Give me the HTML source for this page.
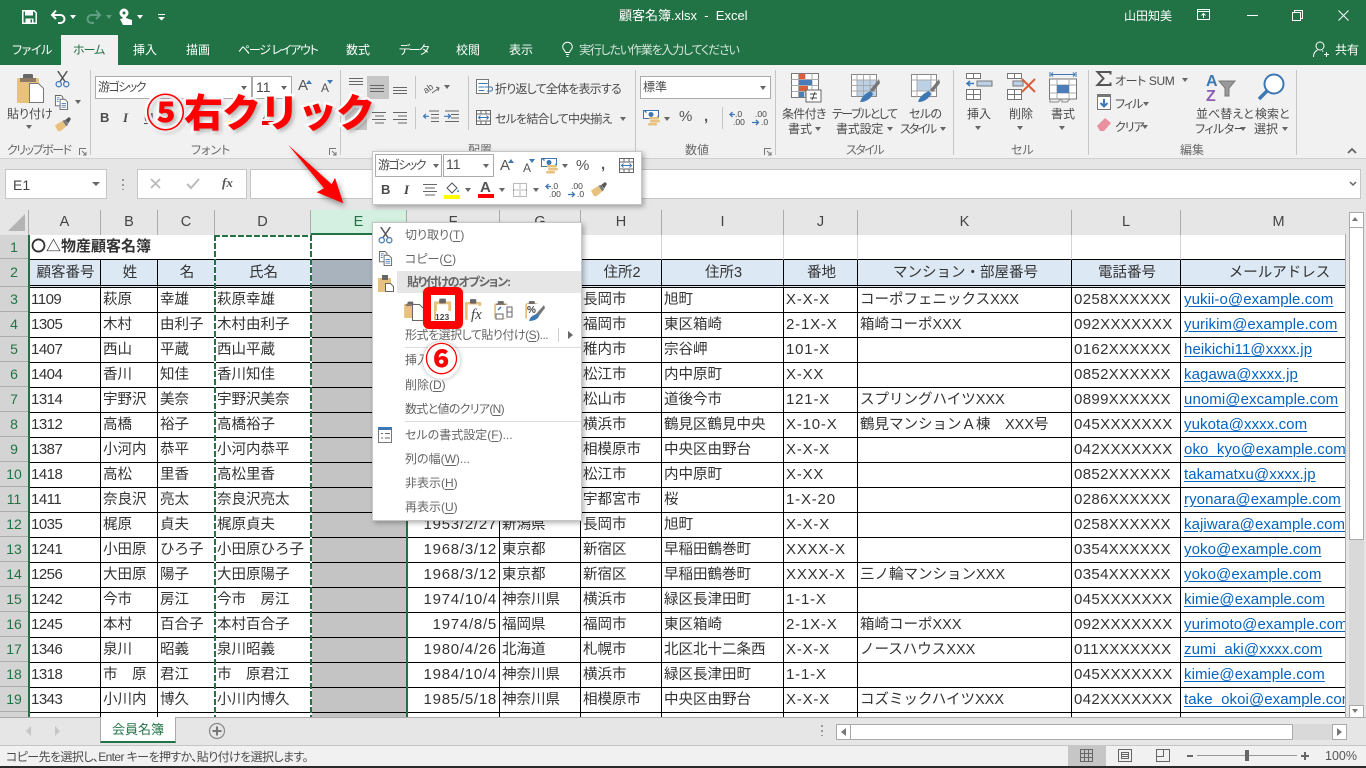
<!DOCTYPE html>
<html lang="ja"><head><meta charset="utf-8"><title>顧客名簿.xlsx - Excel</title>
<style>
*{box-sizing:border-box}
html,body{margin:0;padding:0;width:1366px;height:768px;overflow:hidden;background:#e6e6e6}
body{position:relative;font-family:"Liberation Sans","Noto Sans CJK JP",sans-serif}
.a{position:absolute}
.t{position:absolute;white-space:nowrap;line-height:16px;font-size:12px;color:#4c4c4c;font-feature-settings:"palt"}
.w{color:#fff}
.g{color:#6a6a6a}
.sep{position:absolute;top:70px;height:85px;width:1px;background:#c6c6c6}
.box{position:absolute;background:#fff;border:1px solid #ababab}
.dd{position:absolute;width:0;height:0;border-left:3.5px solid transparent;border-right:3.5px solid transparent;border-top:4px solid #666}
svg{position:absolute;overflow:visible}
#grid{position:absolute;left:29px;top:235px;width:1317px;height:482px;overflow:hidden;background:#fff}
table{border-collapse:separate;border-spacing:0;table-layout:fixed;width:1317px;font-size:14.5px;color:#333}
td{padding:0 0 0 2px;height:25px;border-right:1px solid #000;border-bottom:1px solid #000;white-space:nowrap;overflow:hidden;line-height:24px}
tr.r1 td{height:24px;border-right:1px solid #d4d4d4}
tr.r2 td{height:28px;border-bottom:3px double #000;background:#dce9f5;text-align:center}
tr.r2 td.e,td.e{padding:0}
tr.r2 td.e{background:#a9b3bd}
td.e{background:#c4c4c4}
td.n{font-size:15px;letter-spacing:-.5px}
td.d{text-align:right;padding-right:2px;font-size:15px;letter-spacing:.75px}
td.x{font-size:15px;letter-spacing:.35px}
td.j{font-size:15px;letter-spacing:.8px}
td.m{font-size:15px;letter-spacing:.08px;color:#0563c1;padding-left:3px}
td.m u{text-underline-offset:2px}
.ch{position:absolute;top:210px;height:25px;border-right:1px solid #ababab;background:#e6e6e6;text-align:center;font-size:14.5px;line-height:24px;color:#444}
.rh{position:absolute;left:0;width:28px;background:#d4d4d4;border-bottom:1px solid #ababab;text-align:center;font-size:14px;color:#217346;line-height:24px}
.mi{position:absolute;left:405px;white-space:nowrap;font-size:12px;line-height:16px;color:#666;font-feature-settings:"palt"}
.mi u{text-underline-offset:2px}
</style></head>
<body>
<svg width="0" height="0" style="position:absolute">
<defs>
<symbol id="clip" viewBox="0 0 30 30"><rect x="2" y="5" width="22" height="25" rx="1.5" fill="#e8c17f"/><rect x="8" y="1" width="10" height="7" rx="1.5" fill="#666"/><rect x="5" y="5" width="16" height="4" fill="#8a7a66"/></symbol>
<symbol id="scis" viewBox="0 0 16 18"><path d="M3 0l7.5 11M13 0L5.5 11" stroke="#555" stroke-width="1.6" fill="none"/><circle cx="4" cy="14" r="2.8" fill="none" stroke="#4a7ebb" stroke-width="1.4"/><circle cx="12" cy="14" r="2.8" fill="none" stroke="#4a7ebb" stroke-width="1.4"/></symbol>
<symbol id="copy" viewBox="0 0 16 16"><path d="M1.5.5h6l2 2v9h-8z" fill="#fff" stroke="#666"/><path d="M6.500 4.500h5l3 3v8h-8z" fill="#fff" stroke="#666"/><path d="M8 9h5M8 11h5M8 13h5M3 3h3M3 5h2M3 7h2" stroke="#4a7ebb"/></symbol>
<symbol id="brush" viewBox="0 0 18 16"><path d="M1 9l8-5 4 6-6 5H4z" fill="#e8c17f"/><path d="M9 4l4 6 2-2-3-5z" fill="#777"/><path d="M12 3l4-3 2 2-3 5z" fill="#555"/></symbol>
<symbol id="inc" viewBox="0 0 16 16"><text x="6" y="7" font-size="8.500" fill="#444" font-family="Liberation Sans">.0</text><text x="4" y="15" font-size="8.500" fill="#444" font-family="Liberation Sans">.00</text><path d="M1 4.500h5M3.500 2L1 4.500 3.500 7" stroke="#3d78b5" stroke-width="1.300" fill="none"/></symbol>
<symbol id="dec" viewBox="0 0 16 16"><text x="3" y="7" font-size="8.500" fill="#444" font-family="Liberation Sans">.00</text><text x="9" y="15" font-size="8.500" fill="#444" font-family="Liberation Sans">.0</text><path d="M0 12.500h6M4 10l2.500 2.500L4 15" stroke="#3d78b5" stroke-width="1.300" fill="none"/></symbol>
<symbol id="cur" viewBox="0 0 17 16"><rect x=".5" y=".5" width="15" height="8" fill="#fff" stroke="#3d78b5"/><path d="M.5 .5h3v3M15.500 5v3.500h-3" fill="#3d78b5"/><circle cx="8" cy="4.500" r="2.500" fill="#3d78b5"/><rect x="6" y="7" width="10" height="2.500" rx="1" fill="#e8c17f"/><rect x="7" y="10" width="10" height="2.500" rx="1" fill="#e8c17f"/><rect x="5" y="13" width="9" height="2.500" rx="1" fill="#e8c17f"/></symbol>
<symbol id="merge" viewBox="0 0 15 15"><rect x=".5" y=".5" width="14" height="14" fill="#fff" stroke="#666"/><path d="M.5 4h14M.5 11h14M5 .5V4M10 .5V4M5 11v3.500M10 11v3.500" stroke="#666" fill="none"/><path d="M2.500 7.500h10M4.500 5.500l-2 2 2 2M10.500 5.500l2 2-2 2" stroke="#3d78b5" fill="none"/></symbol>
<symbol id="clipo" viewBox="0 0 20 23"><rect x="0" y="3" width="18" height="20" rx="1" fill="#e8c17f"/><rect x="3" y="6" width="12" height="17" fill="#fff"/><rect x="5.500" y="0" width="7" height="5" rx="1" fill="#666"/></symbol>
</defs></svg>

<!-- title bar -->
<div class="a" style="left:0;top:0;width:1366px;height:65px;background:#217346"></div>
<svg style="left:22px;top:10px" width="15" height="14" viewBox="0 0 15 14"><path d="M.8.8h11.400L14.200 2.800v10.400H.8z" fill="none" stroke="#fff" stroke-width="1.500"/><rect x="3" y="1" width="8" height="4.500" fill="#fff"/><rect x="3.500" y="8.500" width="8" height="4.500" fill="#fff"/><rect x="8.500" y="9.500" width="1.500" height="3" fill="#217346"/></svg>
<svg style="left:51px;top:9px" width="15" height="15" viewBox="0 0 15 15"><path d="M1.500 6h8a4 4 0 0 1 0 8H7M5 1.500L1 6l4 4" fill="none" stroke="#fff" stroke-width="2"/></svg>
<div class="dd" style="left:70px;top:15px;border-top-color:#fff"></div>
<svg style="left:86px;top:9px" width="15" height="15" viewBox="0 0 15 15"><path d="M13.500 6h-8a4 4 0 0 0 0 8H8M10 1.500L14 6l-4 4" fill="none" stroke="#5f9f7f" stroke-width="2"/></svg>
<div class="dd" style="left:106px;top:15px;border-top-color:#5f9f7f"></div>
<svg style="left:118px;top:8px" width="15" height="18" viewBox="0 0 15 18"><circle cx="6" cy="5" r="4.500" fill="#fff"/><rect x="4.500" y="4" width="3.500" height="9" fill="#fff"/><path d="M2 11l3 6h9v-5l-6-2z" fill="#fff"/><circle cx="6" cy="5" r="1.500" fill="#217346"/></svg>
<div class="dd" style="left:137px;top:15px;border-top-color:#fff"></div>
<svg style="left:158px;top:14px" width="7" height="7" viewBox="0 0 7 7"><path d="M0 .5h7" stroke="#fff"/><path d="M0 3h7L3.500 6.500z" fill="#fff"/></svg>
<div class="t w" style="left:619px;top:8px;font-size:13px">顧客名簿.xlsx&nbsp; -&nbsp; Excel</div>
<div class="t w" style="left:1124px;top:8px;font-size:12px">山田知美</div>
<svg style="left:1197px;top:9px" width="15" height="12" viewBox="0 0 15 12"><path d="M.5.500h12v10H.5zM.5 2.500h12M6.500 9V5M4.500 6.500l2-2 2 2" fill="none" stroke="#fff"/></svg>
<div class="a" style="left:1247px;top:15px;width:11px;height:1px;background:#fff"></div>
<svg style="left:1292px;top:10px" width="11" height="11" viewBox="0 0 11 11"><path d="M.5 2.500h8v8h-8zM2.500 2.500v-2h8v8h-2" fill="none" stroke="#fff"/></svg>
<svg style="left:1338px;top:10px" width="11" height="11" viewBox="0 0 11 11"><path d="M.5.500l10 10M10.500.500l-10 10" stroke="#fff"/></svg>

<!-- tabs -->
<div class="a" style="left:61px;top:35px;width:57px;height:31px;background:#f1f1f1"></div>
<div class="t w" style="left:12px;top:42px;letter-spacing:-.4px">ファイル</div>
<div class="t" style="left:73px;top:42px;color:#217346;letter-spacing:-1px">ホーム</div>
<div class="t w" style="left:133px;top:42px">挿入</div>
<div class="t w" style="left:186px;top:42px">描画</div>
<div class="t w" style="left:238px;top:42px;letter-spacing:-1.300px">ページ レイアウト</div>
<div class="t w" style="left:346px;top:42px">数式</div>
<div class="t w" style="left:399px;top:42px;letter-spacing:-1.500px">データ</div>
<div class="t w" style="left:456px;top:42px">校閲</div>
<div class="t w" style="left:509px;top:42px">表示</div>
<svg style="left:562px;top:42px" width="11" height="15" viewBox="0 0 11 15"><path d="M3.500 10.500C3 8 .7 7.500.7 5a4.800 4.800 0 0 1 9.600 0c0 2.500-2.300 3-2.800 5.500zM4 12.500h3M4.500 14.500h2" fill="none" stroke="#fff"/></svg>
<div class="t" style="left:579px;top:42px;color:#d5e6dc;letter-spacing:-1.200px">実行したい作業を入力してください</div>
<svg style="left:1313px;top:41px" width="16" height="17" viewBox="0 0 16 17"><circle cx="7" cy="5" r="4" fill="none" stroke="#fff"/><path d="M.5 16c0-4 2-6 4-7M9 9.500l1 1M11 13.500h5M13.500 11v5" fill="none" stroke="#fff"/></svg>
<div class="t w" style="left:1335px;top:42px">共有</div>

<!-- ribbon -->
<div class="a" style="left:0;top:65px;width:1366px;height:93px;background:#f1f1f1"></div>
<div class="a" style="left:0;top:158px;width:1366px;height:1px;background:#d0d0d0"></div>
<div class="sep" style="left:90px"></div><div class="sep" style="left:340px"></div><div class="sep" style="left:635px"></div><div class="sep" style="left:775px"></div><div class="sep" style="left:953px"></div><div class="sep" style="left:1088px"></div><div class="sep" style="left:1296px"></div>

<!-- clipboard -->
<svg style="left:15px;top:73px" width="30" height="30"><use href="#clip" width="30" height="30"/><path d="M14.500 13.500h9l5 5v14h-14z" transform="translate(0 -3)" fill="#fff" stroke="#777"/></svg>
<div class="t" style="left:7px;top:106px">貼り付け</div>
<div class="dd" style="left:26px;top:125px"></div>
<svg style="left:55px;top:71px" width="15" height="17"><use href="#scis" width="15" height="17"/></svg>
<svg style="left:54px;top:95px" width="15" height="15"><use href="#copy" width="15" height="15"/></svg>
<div class="dd" style="left:75px;top:100px"></div>
<svg style="left:54px;top:117px" width="17" height="15"><use href="#brush" width="17" height="15"/></svg>
<div class="t g" style="left:7px;top:142px;letter-spacing:-1.500px">クリップボード</div>
<svg style="left:79px;top:148px" width="8" height="8" viewBox="0 0 8 8"><path d="M.5 7V.5H7M3 3l4 4M7 4v3H4" fill="none" stroke="#777"/></svg>

<!-- font -->
<div class="box" style="left:95px;top:76px;width:157px;height:23px"></div>
<div class="t" style="left:98px;top:79px;letter-spacing:-1.500px">游ゴシック</div>
<div class="dd" style="left:241px;top:86px"></div>
<div class="box" style="left:252px;top:76px;width:40px;height:23px"></div>
<div class="t" style="left:256px;top:79px;font-size:14px">11</div>
<div class="dd" style="left:281px;top:86px"></div>
<div class="t" style="left:298px;top:78px;font-size:15px;color:#555">A</div>
<div class="dd" style="left:306px;top:80px;border-top:0;border-bottom:4px solid #3d78b5"></div>
<div class="t" style="left:321px;top:80px;font-size:12px;color:#555">A</div>
<div class="dd" style="left:327px;top:80px;border-top-color:#3d78b5"></div>
<div class="t" style="left:100px;top:110px;font-weight:bold;font-size:13px">B</div>
<div class="t" style="left:123px;top:110px;font-style:italic;font-family:'Liberation Serif';font-size:13px;font-weight:bold">I</div>
<div class="t" style="left:144px;top:110px;font-size:13px;font-weight:bold;text-decoration:underline">U</div>
<div class="a" style="left:262px;top:121px;width:14px;height:4px;background:#e00"></div>
<div class="t" style="left:263px;top:107px;font-size:13px;color:#555">A</div>
<div class="a" style="left:228px;top:121px;width:3px;height:4px;background:#ff0"></div>
<div class="t g" style="left:191px;top:142px">フォント</div>
<svg style="left:329px;top:148px" width="8" height="8" viewBox="0 0 8 8"><path d="M.5 7V.5H7M3 3l4 4M7 4v3H4" fill="none" stroke="#777"/></svg>

<!-- alignment -->
<div class="a" style="left:367px;top:76px;width:22px;height:23px;background:#c6c6c6"></div>
<div class="a" style="left:345px;top:106px;width:22px;height:24px;background:#c6c6c6"></div>
<svg style="left:349px;top:78px" width="60" height="18" viewBox="0 0 60 18"><path d="M0 .500h14M0 3.500h14M0 6.500h14M21 7.500h14M21 10.500h14M21 13.500h14M44 9.500h14M44 12.500h14M44 15.500h14" stroke="#666"/></svg>
<svg style="left:349px;top:111px" width="60" height="15" viewBox="0 0 60 15"><path d="M23 1.500h14M26 5h9M23 8.500h14M26 12h9M44 1.500h14M49 5h9M44 8.500h14M49 12h9" stroke="#666"/></svg>
<div class="a" style="left:415px;top:76px;width:1px;height:23px;background:#c6c6c6"></div>
<div class="a" style="left:415px;top:107px;width:1px;height:22px;background:#c6c6c6"></div>
<svg style="left:423px;top:80px" width="17" height="14" viewBox="0 0 17 14"><text x="0" y="11" font-size="9" fill="#555" transform="rotate(-35 6 8)" font-family="Liberation Sans">ab</text><path d="M9 13l7-5M13 7l3 1-1 3" fill="none" stroke="#666"/></svg>
<div class="dd" style="left:444px;top:85px"></div>
<svg style="left:423px;top:110px" width="37" height="15" viewBox="0 0 37 15"><path d="M6 1h10M8 4.500h8M8 8h8M8 11.500h8M22 1h14M28 4.500h8M28 8h8M22 11.500h14" stroke="#666"/><path d="M6 6.300H.5M3 4L.5 6.300 3 8.500M21 6.300h6M25 4l2.500 2.300L25 8.500" fill="none" stroke="#3d78b5" stroke-width="1.200"/></svg>
<div class="a" style="left:468px;top:76px;width:1px;height:54px;background:#c6c6c6"></div>
<svg style="left:476px;top:79px" width="17" height="15" viewBox="0 0 17 15"><rect x=".5" y=".5" width="12" height="14" fill="#fff" stroke="#777"/><path d="M2.500 4.500h9M2.500 8h6M2.500 11.500h6" stroke="#3d78b5"/><path d="M9 8h6a2 2 0 0 1-1 4h-3" fill="none" stroke="#3d78b5"/></svg>
<div class="t" style="left:495px;top:81px;letter-spacing:-.8px">折り返して全体を表示する</div>
<svg style="left:476px;top:110px" width="15" height="15"><use href="#merge" width="15" height="15"/></svg>
<div class="t" style="left:495px;top:111px;letter-spacing:-.8px">セルを結合して中央揃え</div>
<div class="dd" style="left:620px;top:117px"></div>
<div class="t g" style="left:468px;top:142px">配置</div>

<!-- number -->
<div class="box" style="left:640px;top:76px;width:131px;height:23px"></div>
<div class="t" style="left:643px;top:79px">標準</div>
<div class="dd" style="left:760px;top:86px"></div>
<svg style="left:643px;top:110px" width="17" height="16"><use href="#cur" width="17" height="16"/></svg>
<div class="dd" style="left:664px;top:117px"></div>
<div class="t" style="left:679px;top:109px;font-size:15px;color:#555">%</div>
<div class="t" style="left:704px;top:109px;font-size:15px;font-weight:bold;color:#555">,</div>
<div class="a" style="left:722px;top:107px;width:1px;height:22px;background:#c6c6c6"></div>
<svg style="left:729px;top:110px" width="16" height="16"><use href="#inc" width="16" height="16"/></svg>
<svg style="left:752px;top:110px" width="16" height="16"><use href="#dec" width="16" height="16"/></svg>
<div class="t g" style="left:685px;top:142px">数値</div>
<svg style="left:764px;top:148px" width="8" height="8" viewBox="0 0 8 8"><path d="M.5 7V.5H7M3 3l4 4M7 4v3H4" fill="none" stroke="#777"/></svg>

<!-- styles -->
<svg style="left:791px;top:73px" width="31" height="30" viewBox="0 0 31 30"><rect x=".5" y=".5" width="27" height="24" fill="#fff" stroke="#777"/><path d="M.5 6.500h27M.5 12.500h27M.5 18.500h27M7.500.5v24M14 .5v24M21 .5v24" stroke="#aaa"/><rect x="8" y="1" width="6" height="5" fill="#d9603b"/><rect x="8" y="7" width="13" height="5" fill="#4a7ebb"/><rect x="8" y="13" width="9" height="5" fill="#d9603b"/><rect x="8" y="19" width="5" height="5" fill="#4a7ebb"/><rect x="15" y="17" width="15" height="12" fill="#fff" stroke="#666"/><path d="M19 21h7M19 25h7M24 19l-3 8" stroke="#444"/></svg>
<svg style="left:851px;top:73px" width="30" height="30" viewBox="0 0 30 30"><rect x=".5" y="1.500" width="25" height="22" fill="#fff" stroke="#888"/><rect x="6" y="7" width="19" height="16" fill="#bcd0e6"/><path d="M.5 7h25M.5 12.500h25M.5 18h25M6 1.500v22M12.500 1.500v22M19 1.500v22" stroke="#aaa"/><path d="M19 17l9-11 1 4-7 9z" fill="#777"/><path d="M9 29c2-6 6-9 11-11l2 3c-2 4-6 8-13 8z" fill="#3d78b5"/></svg>
<svg style="left:911px;top:73px" width="30" height="30" viewBox="0 0 30 30"><rect x=".5" y="1.500" width="25" height="22" fill="#fff" stroke="#888"/><rect x="6" y="7" width="14" height="11" fill="#bcd0e6"/><path d="M.5 7h25M.5 18h25M6 1.500v22M20 1.500v22" stroke="#aaa"/><path d="M19 17l9-11 1 4-7 9z" fill="#777"/><path d="M7 29c2-6 6-9 11-11l2 3c-2 4-6 8-13 8z" fill="#3d78b5"/></svg>
<div class="t" style="left:782px;top:106px;letter-spacing:-.7px">条件付き</div>
<div class="t" style="left:788px;top:121px">書式</div><div class="dd" style="left:815px;top:127px"></div>
<div class="t" style="left:832px;top:106px;letter-spacing:-1.500px">テーブルとして</div>
<div class="t" style="left:836px;top:121px;letter-spacing:-.2px">書式設定</div><div class="dd" style="left:887px;top:127px"></div>
<div class="t" style="left:909px;top:106px;letter-spacing:-.6px">セルの</div>
<div class="t" style="left:900px;top:121px;letter-spacing:-2px">スタイル</div><div class="dd" style="left:940px;top:127px"></div>
<div class="t g" style="left:846px;top:142px;letter-spacing:-1.500px">スタイル</div>

<!-- cells -->
<svg style="left:966px;top:73px" width="27" height="28" viewBox="0 0 27 28"><path d="M.5.500h14v5H.5zM7.500.5v5M.5 16.500h14v10H.5zM.5 21.500h14M7.500 16.500v10" fill="#fff" stroke="#777"/><rect x="11" y="8" width="15" height="5" fill="#bcd0e6" stroke="#777"/><path d="M1 10.500h7M4 8l-3 2.500L4 13" fill="none" stroke="#3d78b5" stroke-width="1.500"/></svg>
<svg style="left:1007px;top:73px" width="30" height="28" viewBox="0 0 30 28"><path d="M.5.500h14v5H.5zM7.500.5v5M.5 16.500h14v10H.5zM.5 21.500h14M7.500 16.500v10" fill="#fff" stroke="#777"/><rect x="6" y="8" width="10" height="5" fill="#bcd0e6" stroke="#777"/><path d="M15 6l13 13M28 6L15 19" stroke="#d9603b" stroke-width="2"/></svg>
<svg style="left:1049px;top:71px" width="28" height="32" viewBox="0 0 28 32"><path d="M1 1v5M27 1v5M2 3.500h24M2 3.500l2-2M2 3.500l2 2M26 3.500l-2-2M26 3.500l-2 2" fill="none" stroke="#3d78b5"/><rect x=".5" y="8" width="27" height="20" fill="#fff" stroke="#777"/><path d="M8 8v20M20 8v20M.5 14h27M.5 22h27" stroke="#aaa"/><rect x="8" y="14" width="12" height="8" fill="#4a7ebb"/><path d="M1 28v3h8l3-3M13 28v3h5l3-3" fill="none" stroke="#888"/></svg>
<div class="t" style="left:967px;top:106px">挿入</div><div class="dd" style="left:975px;top:126px"></div>
<div class="t" style="left:1009px;top:106px">削除</div><div class="dd" style="left:1017px;top:126px"></div>
<div class="t" style="left:1051px;top:106px">書式</div><div class="dd" style="left:1059px;top:126px"></div>
<div class="t g" style="left:1011px;top:142px">セル</div>

<!-- editing -->
<svg style="left:1096px;top:71px" width="15" height="15" viewBox="0 0 15 15"><path d="M14.500 3.500V1H1.500l6 6.500-6 6.500h13v-2.500" fill="none" stroke="#555" stroke-width="2"/></svg>
<div class="t" style="left:1115px;top:73px;letter-spacing:-.4px">オート SUM</div><div class="dd" style="left:1182px;top:78px"></div>
<svg style="left:1097px;top:94px" width="14" height="16" viewBox="0 0 14 16"><rect x=".5" y=".5" width="13" height="15" fill="#fff" stroke="#777"/><rect width="14" height="3" fill="#777"/><path d="M7 5v7M3.500 9L7 12.500 10.500 9" fill="none" stroke="#3d78b5" stroke-width="2"/></svg>
<div class="t" style="left:1115px;top:96px;letter-spacing:-1px">フィル</div><div class="dd" style="left:1143px;top:102px"></div>
<svg style="left:1097px;top:118px" width="14" height="13" viewBox="0 0 14 13"><path d="M0 8L8 0l6 5-7 8H3z" fill="#ea8fa0"/></svg>
<div class="t" style="left:1115px;top:119px;letter-spacing:-1px">クリア</div><div class="dd" style="left:1142px;top:125px"></div>
<svg style="left:1206px;top:71px" width="30" height="32" viewBox="0 0 30 32"><text x="0" y="15" font-size="16" font-weight="bold" fill="#3d78b5" font-family="Liberation Sans">A</text><text x="0" y="30" font-size="16" font-weight="bold" fill="#8e5eb0" font-family="Liberation Sans">Z</text><path d="M13 10h16l-6 7v8h-4v-8z" fill="#999" stroke="#777"/></svg>
<svg style="left:1257px;top:73px" width="28" height="28" viewBox="0 0 28 28"><circle cx="17" cy="11" r="9.500" fill="#fff" stroke="#3d78b5" stroke-width="2"/><path d="M10 18L2 26" stroke="#3d78b5" stroke-width="3.500"/></svg>
<div class="t" style="left:1196px;top:106px">並べ替えと</div>
<div class="t" style="left:1195px;top:121px;letter-spacing:-.5px">フィルター</div><div class="dd" style="left:1240px;top:127px"></div>
<div class="t" style="left:1255px;top:106px">検索と</div>
<div class="t" style="left:1254px;top:121px">選択</div><div class="dd" style="left:1282px;top:127px"></div>
<div class="t g" style="left:1180px;top:142px">編集</div>
<svg style="left:1347px;top:147px" width="10" height="7" viewBox="0 0 10 7"><path d="M1 6l4-4 4 4" fill="none" stroke="#666" stroke-width="1.800"/></svg>

<!-- formula bar -->
<div class="box" style="left:5px;top:169px;width:102px;height:30px;border-color:#c6c6c6"></div>
<div class="t" style="left:13px;top:177px;font-size:14px;color:#444">E1</div>
<div class="dd" style="left:92px;top:182px;border-left-width:4px;border-right-width:4px;border-top-width:4.500px"></div>
<div class="a" style="left:122px;top:179px;width:2px;height:11px;background:repeating-linear-gradient(#999 0 2px,transparent 2px 5px)"></div>
<div class="box" style="left:137px;top:169px;width:110px;height:30px;border-color:#c6c6c6"></div>
<svg style="left:150px;top:178px" width="11" height="11" viewBox="0 0 11 11"><path d="M1 1l9 9M10 1l-9 9" stroke="#bbb" stroke-width="1.800"/></svg>
<svg style="left:186px;top:178px" width="14" height="11" viewBox="0 0 14 11"><path d="M1 6l4 4 8-9" fill="none" stroke="#bbb" stroke-width="2"/></svg>
<div class="t" style="left:222px;top:175px;font:italic bold 13px/16px 'Liberation Serif';color:#555">fx</div>
<div class="box" style="left:250px;top:169px;width:1111px;height:30px;border-color:#c6c6c6"></div>
<svg style="left:1349px;top:181px" width="8" height="6" viewBox="0 0 8 6"><path d="M1 1l3 3 3-3" fill="none" stroke="#666" stroke-width="1.500"/></svg>

<!-- column headers -->
<div class="a" style="left:0;top:210px;width:1346px;height:25px;background:#e6e6e6"></div>
<svg style="left:8px;top:214px" width="17" height="17"><path d="M17 0v17H0z" fill="#b4b4b4"/></svg>
<div class="a" style="left:28px;top:210px;width:1px;height:25px;background:#ababab"></div>
<div class="ch" style="left:29px;width:72px">A</div>
<div class="ch" style="left:101px;width:57px">B</div>
<div class="ch" style="left:158px;width:57px">C</div>
<div class="ch" style="left:215px;width:96px">D</div>
<div class="ch" style="left:311px;width:96px;background:#d3f0e0;color:#217346;border-bottom:2px solid #217346">E</div>
<div class="ch" style="left:407px;width:93px">F</div>
<div class="ch" style="left:500px;width:81px">G</div>
<div class="ch" style="left:581px;width:81px">H</div>
<div class="ch" style="left:662px;width:122px">I</div>
<div class="ch" style="left:784px;width:74px">J</div>
<div class="ch" style="left:858px;width:214px">K</div>
<div class="ch" style="left:1072px;width:109px">L</div>
<div class="ch" style="left:1181px;width:165px;padding-left:30px;border-right:0">M</div>

<!-- row headers -->
<div class="a" style="left:0;top:235px;width:28px;height:482px;background:#d4d4d4"></div>
<div class="rh" style="top:235px;height:24px">1</div>
<div class="rh" style="top:259px;height:28px;line-height:26px">2</div>
<div class="rh" style="top:287px;height:25px">3</div>
<div class="rh" style="top:312px;height:25px">4</div>
<div class="rh" style="top:337px;height:25px">5</div>
<div class="rh" style="top:362px;height:25px">6</div>
<div class="rh" style="top:387px;height:25px">7</div>
<div class="rh" style="top:412px;height:25px">8</div>
<div class="rh" style="top:437px;height:25px">9</div>
<div class="rh" style="top:462px;height:25px">10</div>
<div class="rh" style="top:487px;height:25px">11</div>
<div class="rh" style="top:512px;height:25px">12</div>
<div class="rh" style="top:537px;height:25px">13</div>
<div class="rh" style="top:562px;height:25px">14</div>
<div class="rh" style="top:587px;height:25px">15</div>
<div class="rh" style="top:612px;height:25px">16</div>
<div class="rh" style="top:637px;height:25px">17</div>
<div class="rh" style="top:662px;height:25px">18</div>
<div class="rh" style="top:687px;height:25px">19</div>

<!-- sheet grid -->
<div id="grid"><table>
<colgroup><col style="width:72px"><col style="width:57px"><col style="width:57px"><col style="width:96px"><col style="width:96px"><col style="width:93px"><col style="width:81px"><col style="width:81px"><col style="width:122px"><col style="width:74px"><col style="width:214px"><col style="width:109px"><col style="width:165px"></colgroup>
<tr class="r1"><td colspan="3" style="font-weight:bold;font-size:15px;border-right:1px solid #d4d4d4">〇△物産顧客名簿</td><td></td><td class="e" style="background:#fff"></td><td></td><td></td><td></td><td></td><td></td><td></td><td></td><td></td></tr>
<tr class="r2"><td>顧客番号</td><td>姓</td><td>名</td><td>氏名</td><td class="e"></td><td>生年月日</td><td>住所1</td><td>住所2</td><td>住所3</td><td>番地</td><td>マンション・部屋番号</td><td>電話番号</td><td style="padding-left:32px;border-right:0;overflow:hidden">メールアドレス</td></tr>
<tr><td class="n">1109</td><td>萩原</td><td>幸雄</td><td>萩原幸雄</td><td class="e"></td><td></td><td></td><td>長岡市</td><td>旭町</td><td class="j">X-X-X</td><td>コーポフェニックスXXX</td><td class="x">0258XXXXXX</td><td class="m"><u>yukii-o@example.com</u></td></tr>
<tr><td class="n">1305</td><td>木村</td><td>由利子</td><td>木村由利子</td><td class="e"></td><td></td><td></td><td>福岡市</td><td>東区箱崎</td><td class="j">2-1X-X</td><td>箱崎コーポXXX</td><td class="x">092XXXXXXX</td><td class="m"><u>yurikim@example.com</u></td></tr>
<tr><td class="n">1407</td><td>西山</td><td>平蔵</td><td>西山平蔵</td><td class="e"></td><td></td><td></td><td>稚内市</td><td>宗谷岬</td><td class="j">101-X</td><td></td><td class="x">0162XXXXXX</td><td class="m"><u>heikichi11@xxxx.jp</u></td></tr>
<tr><td class="n">1404</td><td>香川</td><td>知佳</td><td>香川知佳</td><td class="e"></td><td></td><td></td><td>松江市</td><td>内中原町</td><td class="j">X-XX</td><td></td><td class="x">0852XXXXXX</td><td class="m"><u>kagawa@xxxx.jp</u></td></tr>
<tr><td class="n">1314</td><td>宇野沢</td><td>美奈</td><td>宇野沢美奈</td><td class="e"></td><td></td><td></td><td>松山市</td><td>道後今市</td><td class="j">121-X</td><td>スプリングハイツXXX</td><td class="x">0899XXXXXX</td><td class="m"><u>unomi@excample.com</u></td></tr>
<tr><td class="n">1312</td><td>高橋</td><td>裕子</td><td>高橋裕子</td><td class="e"></td><td></td><td></td><td>横浜市</td><td>鶴見区鶴見中央</td><td class="j">X-10-X</td><td>鶴見マンションＡ棟　XXX号</td><td class="x">045XXXXXXX</td><td class="m"><u>yukota@xxxx.com</u></td></tr>
<tr><td class="n">1387</td><td>小河内</td><td>恭平</td><td>小河内恭平</td><td class="e"></td><td></td><td></td><td>相模原市</td><td>中央区由野台</td><td class="j">X-X-X</td><td></td><td class="x">042XXXXXXX</td><td class="m"><u>oko_kyo@example.com</u></td></tr>
<tr><td class="n">1418</td><td>高松</td><td>里香</td><td>高松里香</td><td class="e"></td><td></td><td></td><td>松江市</td><td>内中原町</td><td class="j">X-XX</td><td></td><td class="x">0852XXXXXX</td><td class="m"><u>takamatxu@xxxx.jp</u></td></tr>
<tr><td class="n">1411</td><td>奈良沢</td><td>亮太</td><td>奈良沢亮太</td><td class="e"></td><td></td><td></td><td>宇都宮市</td><td>桜</td><td class="j">1-X-20</td><td></td><td class="x">0286XXXXXX</td><td class="m"><u>ryonara@example.com</u></td></tr>
<tr><td class="n">1035</td><td>梶原</td><td>貞夫</td><td>梶原貞夫</td><td class="e"></td><td class="d">1953/2/27</td><td>新潟県</td><td>長岡市</td><td>旭町</td><td class="j">X-X-X</td><td></td><td class="x">0258XXXXXX</td><td class="m"><u>kajiwara@example.com</u></td></tr>
<tr><td class="n">1241</td><td>小田原</td><td>ひろ子</td><td>小田原ひろ子</td><td class="e"></td><td class="d">1968/3/12</td><td>東京都</td><td>新宿区</td><td>早稲田鶴巻町</td><td class="j">XXXX-X</td><td></td><td class="x">0354XXXXXX</td><td class="m"><u>yoko@example.com</u></td></tr>
<tr><td class="n">1256</td><td>大田原</td><td>陽子</td><td>大田原陽子</td><td class="e"></td><td class="d">1968/3/12</td><td>東京都</td><td>新宿区</td><td>早稲田鶴巻町</td><td class="j">XXXX-X</td><td>三ノ輪マンションXXX</td><td class="x">0354XXXXXX</td><td class="m"><u>yoko@example.com</u></td></tr>
<tr><td class="n">1242</td><td>今市</td><td>房江</td><td>今市　房江</td><td class="e"></td><td class="d">1974/10/4</td><td>神奈川県</td><td>横浜市</td><td>緑区長津田町</td><td class="j">1-1-X</td><td></td><td class="x">045XXXXXXX</td><td class="m"><u>kimie@example.com</u></td></tr>
<tr><td class="n">1245</td><td>本村</td><td>百合子</td><td>本村百合子</td><td class="e"></td><td class="d">1974/8/5</td><td>福岡県</td><td>福岡市</td><td>東区箱崎</td><td class="j">2-1X-X</td><td>箱崎コーポXXX</td><td class="x">092XXXXXXX</td><td class="m"><u>yurimoto@example.com</u></td></tr>
<tr><td class="n">1346</td><td>泉川</td><td>昭義</td><td>泉川昭義</td><td class="e"></td><td class="d">1980/4/26</td><td>北海道</td><td>札幌市</td><td>北区北十二条西</td><td class="j">X-X-X</td><td>ノースハウスXXX</td><td class="x">011XXXXXXX</td><td class="m"><u>zumi_aki@xxxx.com</u></td></tr>
<tr><td class="n">1318</td><td>市　原</td><td>君江</td><td>市　原君江</td><td class="e"></td><td class="d">1984/10/4</td><td>神奈川県</td><td>横浜市</td><td>緑区長津田町</td><td class="j">1-1-X</td><td></td><td class="x">045XXXXXXX</td><td class="m"><u>kimie@example.com</u></td></tr>
<tr><td class="n">1343</td><td>小川内</td><td>博久</td><td>小川内博久</td><td class="e"></td><td class="d">1985/5/18</td><td>神奈川県</td><td>相模原市</td><td>中央区由野台</td><td class="j">X-X-X</td><td>コズミックハイツXXX</td><td class="x">042XXXXXXX</td><td class="m"><u>take_okoi@example.com</u></td></tr>
<tr><td></td><td></td><td></td><td></td><td class="e"></td><td></td><td></td><td></td><td></td><td></td><td></td><td></td><td></td></tr>
</table></div>

<!-- selection lines -->
<div class="a" style="left:28px;top:235px;width:2px;height:482px;background:#217346"></div>
<div class="a" style="left:406px;top:235px;width:2px;height:482px;background:#217346"></div>
<div class="a" style="left:214px;top:235px;width:97px;height:2px;background:repeating-linear-gradient(90deg,#217346 0 6px,#fff 6px 8px)"></div>
<div class="a" style="left:214px;top:235px;width:2px;height:482px;background:repeating-linear-gradient(#217346 0 6px,#fff 6px 8px)"></div>
<div class="a" style="left:310px;top:235px;width:2px;height:482px;background:repeating-linear-gradient(#217346 0 6px,#fff 6px 8px)"></div>
<div class="a" style="left:1345px;top:234px;width:1px;height:483px;background:#ababab"></div>
<div class="a" style="left:1346px;top:210px;width:20px;height:507px;background:#e6e6e6"></div>
<div class="a" style="left:1349px;top:212px;width:15px;height:16px;background:#fff;border:1px solid #ababab"></div>
<div class="dd" style="left:1352px;top:217px;border-top:0;border-bottom:4px solid #777"></div>
<div class="a" style="left:1349px;top:228px;width:15px;height:477px;background:#d9d9d9"></div>
<div class="a" style="left:1349px;top:228px;width:15px;height:312px;background:#fff;border:1px solid #ababab;border-top:0"></div>
<div class="a" style="left:1349px;top:705px;width:15px;height:13px;background:#fff;border:1px solid #ababab"></div>
<div class="dd" style="left:1352px;top:709px;border-top-color:#777"></div>

<!-- sheet tabs -->
<div class="a" style="left:0;top:717px;width:1366px;height:28px;background:#e6e6e6;border-top:1px solid #ababab"></div>
<svg style="left:26px;top:726px" width="34" height="10" viewBox="0 0 34 10"><path d="M5 0v10L0 5zM29 0v10l5-5z" fill="#c6c6c6"/></svg>
<div class="a" style="left:100px;top:717px;width:76px;height:26px;background:#fff;border:1px solid #ababab;border-top:0;border-bottom:2px solid #217346"></div>
<div class="t" style="left:112px;top:722px;font-size:13px;color:#217346">会員名簿</div>
<svg style="left:208px;top:722px" width="18" height="18" viewBox="0 0 18 18"><circle cx="9" cy="9" r="7.500" fill="none" stroke="#888" stroke-width="1.200"/><path d="M9 4.500v9M4.500 9h9" stroke="#777" stroke-width="2"/></svg>
<div class="a" style="left:821px;top:725px;width:2px;height:11px;background:repeating-linear-gradient(#999 0 2px,transparent 2px 5px)"></div>
<div class="a" style="left:836px;top:724px;width:511px;height:16px;background:#d9d9d9"></div>
<div class="a" style="left:836px;top:724px;width:15px;height:16px;background:#fff;border:1px solid #ababab"></div>
<div class="a" style="left:851px;top:724px;width:442px;height:16px;background:#fff;border:1px solid #ababab;border-left:0"></div>
<div class="a" style="left:1332px;top:724px;width:15px;height:16px;background:#fff;border:1px solid #ababab"></div>
<svg style="left:841px;top:728px" width="5" height="8"><path d="M5 0v8L0 4z" fill="#777"/></svg>
<svg style="left:1337px;top:728px" width="5" height="8"><path d="M0 0v8l5-4z" fill="#777"/></svg>

<!-- status bar -->
<div class="a" style="left:0;top:745px;width:1366px;height:21px;background:#f1f1f1;border-top:1px solid #c6c6c6"></div>
<div class="a" style="left:0;top:766px;width:1366px;height:2px;background:#2b2b2b"></div>
<div class="t" style="left:6px;top:749px;font-size:12px;letter-spacing:-.6px">コピー先を選択し、Enter キーを押すか、貼り付けを選択します。</div>
<div class="a" style="left:1068px;top:746px;width:38px;height:20px;background:#c6c6c6"></div>
<svg style="left:1080px;top:749px" width="13" height="13" viewBox="0 0 13 13"><path d="M.5.500h12v12H.5zM.5 4.500h12M.5 8.500h12M4.500.5v12M8.500.5v12" fill="none" stroke="#666"/></svg>
<svg style="left:1118px;top:749px" width="14" height="13" viewBox="0 0 14 13"><path d="M.5.500h13v12H.5zM3.500 3.500h7v6h-7zM3.500 5.500h7M3.500 7.500h7" fill="none" stroke="#666"/></svg>
<svg style="left:1156px;top:749px" width="14" height="13" viewBox="0 0 14 13"><path d="M.5.500h13v12H.5zM.5 7.500h7V.5" fill="none" stroke="#666"/></svg>
<div class="a" style="left:1187px;top:755px;width:6px;height:2px;background:#666"></div>
<div class="a" style="left:1197px;top:755px;width:100px;height:1px;background:#999"></div>
<div class="a" style="left:1245px;top:750px;width:4px;height:11px;background:#666"></div>
<svg style="left:1301px;top:752px" width="8" height="8"><path d="M0 4h8M4 0v8" stroke="#666" stroke-width="2"/></svg>
<div class="t" style="left:1325px;top:748px;font-size:12.500px;color:#555;font-feature-settings:normal">100%</div>

<!-- mini toolbar -->
<div class="a" style="left:372px;top:151px;width:270px;height:54px;background:#fff;border:1px solid #c6c6c6;box-shadow:2px 2px 5px rgba(0,0,0,.3)"></div>
<div class="box" style="left:375px;top:154px;width:67px;height:23px"></div>
<div class="t" style="left:378px;top:157px;letter-spacing:-1.500px">游ゴシック</div>
<div class="dd" style="left:433px;top:164px"></div>
<div class="box" style="left:443px;top:154px;width:51px;height:23px"></div>
<div class="t" style="left:446px;top:156px;font-size:14px">11</div>
<div class="dd" style="left:483px;top:164px"></div>
<div class="t" style="left:500px;top:158px;font-size:15px;color:#555">A</div>
<div class="dd" style="left:508px;top:159px;border-top:0;border-bottom:4px solid #3d78b5"></div>
<div class="t" style="left:523px;top:160px;font-size:12px;color:#555">A</div>
<div class="dd" style="left:529px;top:159px;border-top-color:#3d78b5"></div>
<svg style="left:541px;top:158px" width="17" height="16"><use href="#cur" width="17" height="16"/></svg>
<div class="dd" style="left:562px;top:164px"></div>
<div class="t" style="left:576px;top:158px;font-size:15px;color:#555">%</div>
<div class="t" style="left:601px;top:157px;font-size:15px;font-weight:bold;color:#555">,</div>
<svg style="left:619px;top:158px" width="15" height="15"><use href="#merge" width="15" height="15"/></svg>
<div class="t" style="left:381px;top:182px;font-weight:bold;font-size:13px">B</div>
<div class="t" style="left:404px;top:182px;font:italic bold 13px/16px 'Liberation Serif';color:#444">I</div>
<svg style="left:423px;top:184px" width="14" height="12" viewBox="0 0 14 12"><path d="M0 .5h14M2 4h10M0 7.500h14M2 11h10" stroke="#666"/></svg>
<svg style="left:444px;top:181px" width="16" height="17" viewBox="0 0 16 17"><path d="M3 7l5-5 5 5-5 5z" fill="#fff" stroke="#555"/><path d="M14 8l1 3-2 0z" fill="#3d78b5"/><rect y="14" width="16" height="4" fill="#ff0"/></svg>
<div class="dd" style="left:465px;top:188px"></div>
<div class="t" style="left:480px;top:180px;font-size:15px;font-weight:bold;color:#555">A</div>
<div class="a" style="left:478px;top:194px;width:16px;height:4px;background:#f00"></div>
<div class="dd" style="left:499px;top:188px"></div>
<svg style="left:513px;top:183px" width="14" height="14" viewBox="0 0 14 14"><path d="M.5.500h13v13H.5zM7 .5v13M.5 7h13" fill="none" stroke="#777" stroke-dasharray="1 1"/></svg>
<div class="dd" style="left:533px;top:188px"></div>
<svg style="left:545px;top:182px" width="16" height="16"><use href="#inc" width="16" height="16"/></svg>
<svg style="left:568px;top:182px" width="16" height="16"><use href="#dec" width="16" height="16"/></svg>
<svg style="left:590px;top:182px" width="17" height="15"><use href="#brush" width="17" height="15"/></svg>

<!-- context menu -->
<div class="a" style="left:372px;top:222px;width:210px;height:299px;background:#fff;border:1px solid #c6c6c6;box-shadow:2px 2px 5px rgba(0,0,0,.3)"></div>
<svg style="left:378px;top:227px" width="15" height="17"><use href="#scis" width="15" height="17"/></svg>
<svg style="left:378px;top:251px" width="15" height="15"><use href="#copy" width="15" height="15"/></svg>
<svg style="left:378px;top:275px" width="17" height="17" viewBox="0 0 17 17"><rect x="0" y="3" width="13" height="14" fill="#e8c17f"/><rect x="4" y="0" width="6" height="5" fill="#666"/><path d="M7.500 8.500h5l3 3v5h-8z" fill="#fff" stroke="#666"/></svg>
<div class="mi" style="top:227px">切り取り(<u>T</u>)</div>
<div class="mi" style="top:251px">コピー(<u>C</u>)</div>
<div class="a" style="left:397px;top:271px;width:184px;height:22px;background:#e6e6e6"></div>
<div class="mi" style="left:407px;top:274px;font-weight:bold;color:#666;letter-spacing:-1.100px">貼り付けのオプション:</div>
<!-- paste option icons -->
<svg style="left:403px;top:298px" width="21" height="23"><use href="#clip" width="17" height="23"/><path d="M9.500 6.500h7l4 4v12h-11z" fill="#fff" stroke="#666"/></svg>
<div class="a" style="left:423px;top:287px;width:40px;height:42px;background:#fff;border:8px solid #f00;border-radius:6px;box-shadow:0 0 2px rgba(0,0,0,.2)"></div>
<svg style="left:434px;top:298px" width="19" height="23"><use href="#clipo" width="19" height="23"/><rect x="2" y="13" width="15" height="10" fill="#fff"/><text x="1" y="22" font-size="8.500" font-weight="bold" fill="#444" font-family="Liberation Sans">123</text></svg>
<svg style="left:465px;top:298px" width="21" height="23"><use href="#clipo" width="18" height="23"/><rect x="6" y="8" width="15" height="15" fill="#fff"/><text x="6" y="21" font-size="15" font-style="italic" fill="#444" font-family="Liberation Serif">fx</text></svg>
<svg style="left:493px;top:298px" width="21" height="23"><use href="#clip" width="18" height="23"/><rect x="3" y="7" width="12" height="13" fill="#fff"/><path d="M5 12l3-3M5 16l3 3" stroke="#3d78b5" stroke-width="1.500" fill="none"/><path d="M14 9h5v5h-5zM14 14h5v5h-5zM3 16h7v5H3z" fill="#fff" stroke="#666"/></svg>
<svg style="left:524px;top:298px" width="21" height="23"><use href="#clip" width="18" height="23"/><rect x="3" y="6" width="12" height="16" fill="#fff"/><text x="3" y="15" font-size="10" font-weight="bold" fill="#444" font-family="Liberation Sans">%</text><path d="M12 16l8-9 1 3-6 8z" fill="#777"/><path d="M5 23c1-4 4-6 8-7l2 2c-1 3-5 5-10 5z" fill="#3d78b5"/></svg>
<div class="mi" style="top:327px;letter-spacing:-.5px">形式を選択して貼り付け(<u>S</u>)...</div>
<div class="a" style="left:558px;top:328px;width:1px;height:14px;background:#d0d0d0"></div>
<svg style="left:568px;top:331px" width="5" height="8"><path d="M0 0v8l5-4z" fill="#666"/></svg>
<div class="a" style="left:405px;top:347px;width:176px;height:1px;background:#dcdcdc"></div>
<div class="mi" style="top:352px">挿入(<u>I</u>)</div>
<div class="mi" style="top:377px">削除(<u>D</u>)</div>
<div class="mi" style="top:401px;letter-spacing:-.7px">数式と値のクリア(<u>N</u>)</div>
<div class="a" style="left:405px;top:421px;width:176px;height:1px;background:#dcdcdc"></div>
<svg style="left:378px;top:427px" width="14" height="16" viewBox="0 0 14 16"><rect x=".5" y=".5" width="13" height="15" fill="#fff" stroke="#777"/><rect width="14" height="3" fill="#3d78b5"/><path d="M3 6.500h2M7 6.500h5M3 11h2M7 11h5" stroke="#666"/></svg>
<div class="mi" style="top:427px">セルの書式設定(<u>F</u>)...</div>
<div class="mi" style="top:451px">列の幅(<u>W</u>)...</div>
<div class="mi" style="top:475px">非表示(<u>H</u>)</div>
<div class="mi" style="top:499px">再表示(<u>U</u>)</div>

<!-- annotations -->
<div class="t" style="left:146px;top:90px;height:50px;line-height:50px;font-size:39px;font-weight:900;color:#f00;letter-spacing:-1px;font-feature-settings:normal;-webkit-text-stroke:5px #fff;paint-order:stroke fill;text-shadow:2px 2px 4px rgba(0,0,0,.35)">⑤右クリック</div>
<svg style="left:0;top:0" width="1366" height="768" viewBox="0 0 1366 768"><path d="M288.300 145L331.700 184.300 335 177.700 343.300 203.300 316.700 192.300 324 188.300z" fill="#f00" style="filter:drop-shadow(2px 3px 3px rgba(0,0,0,.4))"/></svg>
<div class="a" style="left:423px;top:342px;width:37px;height:37px;border-radius:50%;background:#fff;box-shadow:0 0 5px rgba(0,0,0,.3)"></div>
<div class="t" style="left:423px;top:342px;width:37px;height:37px;line-height:36px;text-align:center;font-size:33px;font-weight:900;color:#f00;font-feature-settings:normal">⑥</div>
</body></html>
